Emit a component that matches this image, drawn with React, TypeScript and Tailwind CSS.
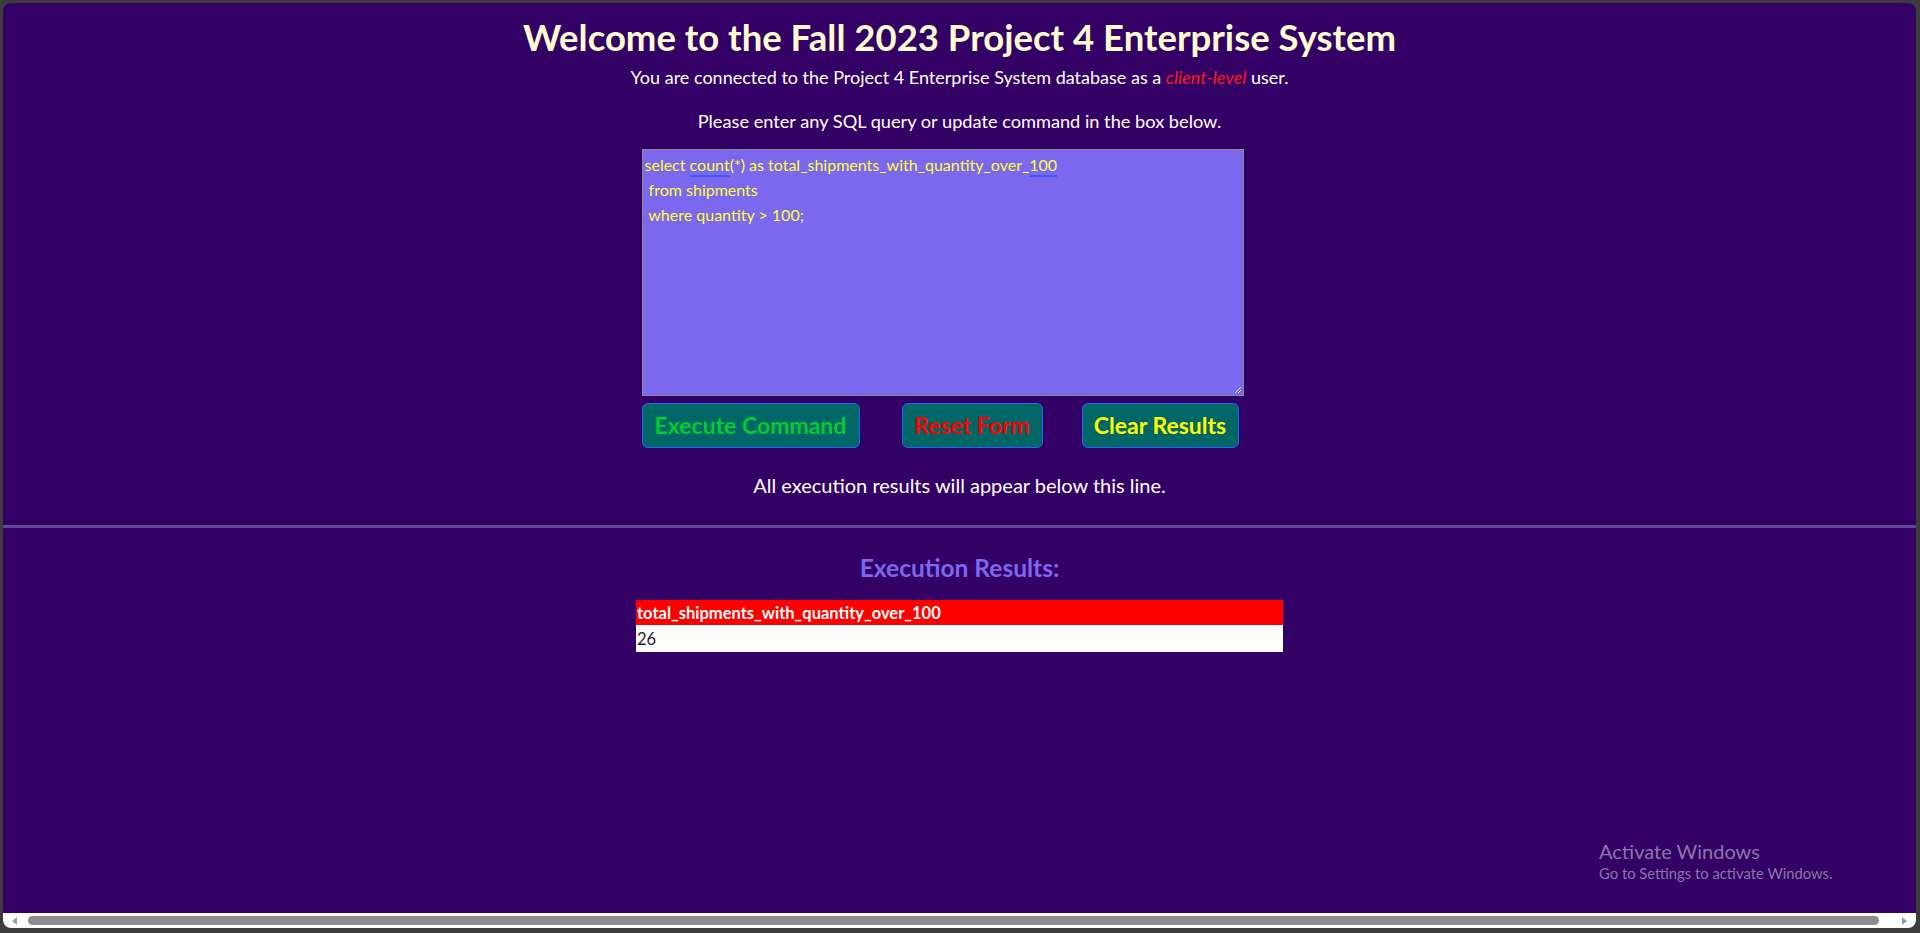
import type { ReactNode } from 'react';

const FONT = { fontFamily: 'Lato, "Open Sans", "Liberation Sans", sans-serif' };

function Btn({ color, width, children }: { color: string; width: string; children: ReactNode }) {
  return (
    <button
      className={`h-[45px] ${width} ${color} bg-[#006666] border border-[#1a6cff] rounded-[6px] text-[23px] font-bold leading-none`}
    >
      {children}
    </button>
  );
}

function SqlBox() {
  const ul = 'underline decoration-[#3a5cff] decoration-2 underline-offset-[4px]';
  return (
    <div className="relative w-[602px] h-[247px] bg-[#7b68ee] border border-[#8a8a8a] px-[2px] py-[2px] text-[16px] leading-[25px] text-[#ffff33] whitespace-pre">
      <div>select <span className={ul}>count</span>(*) as total_shipments_with_quantity_over_<span className={ul}>100</span></div>
      <div> from shipments</div>
      <div> where quantity &gt; 100;</div>
      <svg className="absolute right-[1px] bottom-[1px]" width="9" height="9" viewBox="0 0 9 9">
        <path d="M8 2L2 8M8 5L5 8" stroke="#d8d8e8" strokeWidth="1" />
      </svg>
    </div>
  );
}

function Scrollbar() {
  return (
    <div className="h-[15px] bg-white flex items-center px-[9px] gap-[6px] shrink-0">
      <svg width="6" height="8" viewBox="0 0 6 8"><path d="M5 0L0 4L5 8Z" fill="#9a9aa8" /></svg>
      <div className="flex-1 h-[9px] rounded-full bg-[#8c8c8c] ml-[4px] mr-[16px]" />
      <svg width="6" height="8" viewBox="0 0 6 8"><path d="M1 0L6 4L1 8Z" fill="#8a9ab8" /></svg>
    </div>
  );
}

export default function App() {
  return (
    <div className="h-[933px] w-full bg-[#3c3c3c] pt-[3px] pl-[3px] pr-[4px] pb-[5px]" style={FONT}>
      <div className="relative h-full flex flex-col bg-[#330066] rounded-[8px] overflow-hidden">
        <main className="flex-1 flex flex-col items-center">
          <h1 className="mt-[14px] text-[36.5px] leading-[40px] font-bold text-[#fffdd0]">
            Welcome to the Fall 2023 Project 4 Enterprise System
          </h1>
          <p className="mt-[8px] text-[18px] leading-[24px] text-white">
            You are connected to the Project 4 Enterprise System database as a{' '}
            <span className="italic text-[#ff1a1a]">client-level</span> user.
          </p>
          <p className="mt-[20px] text-[18.2px] leading-[24px] text-white">
            Please enter any SQL query or update command in the box below.
          </p>

          <div className="w-[636px] mt-[16px]">
            <SqlBox />
            <div className="flex mt-[7px]">
              <Btn color="text-[#00cc33]" width="w-[218px]">Execute Command</Btn>
              <div className="ml-[42px]">
                <Btn color="text-[#ff0000]" width="w-[141px]">Reset Form</Btn>
              </div>
              <div className="ml-[39px]">
                <Btn color="text-[#ffff00]" width="w-[157px]">Clear Results</Btn>
              </div>
            </div>
          </div>

          <p className="mt-[24px] text-[20px] leading-[26px] text-white">
            All execution results will appear below this line.
          </p>

          <div className="w-full h-[3px] bg-[#62479a] mt-[27px]" />

          <h2 className="mt-[25px] text-[24.5px] leading-[30px] font-bold text-[#7b68ee]">Execution Results:</h2>

          <table className="mt-[17px] w-[647px] border-collapse text-[16.5px]">
            <thead>
              <tr className="bg-[#ff0000] h-[25px]">
                <th className="text-left font-bold text-white px-[1px] leading-[20px]">
                  total_shipments_with_quantity_over_100
                </th>
              </tr>
            </thead>
            <tbody>
              <tr className="bg-white h-[27px]">
                <td className="text-left text-[#222] px-[1px] leading-[20px]">26</td>
              </tr>
            </tbody>
          </table>
        </main>

        <div className="absolute left-[1596px] top-[835px] text-[#8b76a8] pointer-events-none">
          <div className="text-[20px] leading-[26px]">Activate Windows</div>
          <div className="text-[14.8px] leading-[18px]">Go to Settings to activate Windows.</div>
        </div>

        <Scrollbar />
      </div>
    </div>
  );
}
